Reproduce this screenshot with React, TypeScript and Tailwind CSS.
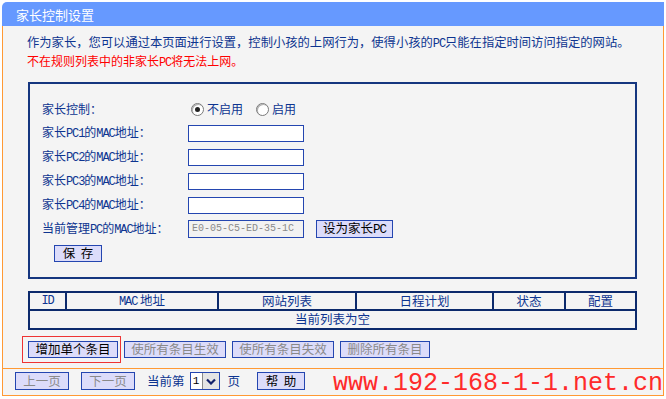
import React from "react";

const CJK = { fontFamily: '"Noto Sans CJK SC", "Noto Sans", sans-serif' };
const MONO = { fontFamily: '"Liberation Mono", "DejaVu Sans Mono", monospace' };

function A({ children, size = "text-[12px]" }: { children: React.ReactNode; size?: string }) {
  return <span className={`${size} leading-none tracking-[-1.1px]`} style={MONO}>{children}</span>;
}

function Radio({ checked }: { checked: boolean }) {
  return (
    <span className="relative inline-flex w-[13px] h-[13px] rounded-full border border-[#7a7a7a] bg-white items-center justify-center shadow-[inset_1px_1px_0_#b0b0b0]">
      {checked && <span className="w-[5px] h-[5px] rounded-full bg-[#222]" />}
    </span>
  );
}

function Btn({ children, w, gray, h = "h-[17px]" }: { children: React.ReactNode; w: string; gray?: boolean; h?: string }) {
  return (
    <div
      className={`${w} ${h} flex items-center justify-center bg-[#dcdcfa] border border-[#2446b0] text-[12.5px] leading-none ${gray ? "text-[#8a8a8a]" : "text-black"}`}
    >
      {children}
    </div>
  );
}

function Row({ label, children }: { label: React.ReactNode; children: React.ReactNode }) {
  return (
    <div className="flex items-center h-[24px]">
      <div className="w-[146px] text-[12px] leading-none text-[#0d3490]">{label}</div>
      {children}
    </div>
  );
}

function Input() {
  return <div className="w-[116px] h-[17px] border border-[#2446b0] bg-white" />;
}

export default function App() {
  return (
    <div className="w-[666px] h-[399px] bg-white relative overflow-hidden" style={CJK}>
      <div className="ml-[2px] mt-[2px] w-[662px]">
        <div className="h-[24px] bg-[#6699ff] rounded-tl-[5px] text-white text-[13px] leading-none pl-[14px] flex items-center">
          家长控制设置
        </div>
        <div className="border-x border-b border-[#ff9933] bg-[#f4f4f4] h-[370px]">
          <div className="pt-[7px] pl-[24px]">
            <div className="h-[19px] flex items-center text-[#0d3490] text-[12.3px] leading-none whitespace-nowrap">
              <span>作为家长，您可以通过本页面进行设置，控制小孩的上网行为，使得小孩的<A>PC</A>只能在指定时间访问指定的网站。</span>
            </div>
            <div className="h-[19px] flex items-center text-[#ff0000] text-[12px] leading-none whitespace-nowrap">
              <span>不在规则列表中的非家长<A>PC</A>将无法上网。</span>
            </div>
          </div>

          <div className="ml-[25px] mt-[11px] w-[609px] h-[197px] border-2 border-[#15367f] pl-[12px] pt-[13px]">
            <Row label="家长控制：">
              <div className="flex items-center ml-[3px] text-[12px] leading-none text-[#0d3490]">
                <Radio checked />
                <span className="ml-[3px]">不启用</span>
                <span className="ml-[13px] flex"><Radio checked={false} /></span>
                <span className="ml-[3px]">启用</span>
              </div>
            </Row>
            <Row label={<>家长<A>PC1</A>的<A>MAC</A>地址：</>}><Input /></Row>
            <Row label={<>家长<A>PC2</A>的<A>MAC</A>地址：</>}><Input /></Row>
            <Row label={<>家长<A>PC3</A>的<A>MAC</A>地址：</>}><Input /></Row>
            <Row label={<>家长<A>PC4</A>的<A>MAC</A>地址：</>}><Input /></Row>
            <Row label={<>当前管理<A>PC</A>的<A>MAC</A>地址：</>}>
              <div
                className="w-[116px] h-[18px] border border-[#2446b0] bg-[#f2f2f2] text-[#8a8a8a] text-[10px] leading-none flex items-center pl-[3px]"
                style={MONO}
              >
                E0-05-C5-ED-35-1C
              </div>
              <div className="ml-[12px]">
                <Btn w="w-[77px]" h="h-[18px]"><span>设为家长<A size="text-[12.5px]">PC</A></span></Btn>
              </div>
            </Row>
            <div className="ml-[12px] mt-[4px]">
              <Btn w="w-[48px]">保&nbsp;&nbsp;存</Btn>
            </div>
          </div>

          <div className="ml-[25px] mt-[12px] w-[609px] border-2 border-[#0c2a6c] text-[12.5px] leading-none text-[#0d3490]">
            <div className="flex h-[18px] border-b-2 border-[#0c2a6c]">
              <div className="w-[37px] flex items-center justify-center border-r-2 border-[#0c2a6c]"><A>ID</A></div>
              <div className="w-[152px] flex items-center justify-center border-r-2 border-[#0c2a6c]">
                <span><A>MAC</A>&nbsp;地址</span>
              </div>
              <div className="w-[138px] flex items-center justify-center border-r-2 border-[#0c2a6c]">网站列表</div>
              <div className="w-[137px] flex items-center justify-center border-r-2 border-[#0c2a6c]">日程计划</div>
              <div className="w-[72px] flex items-center justify-center border-r-2 border-[#0c2a6c]">状态</div>
              <div className="flex-1 flex items-center justify-center">配置</div>
            </div>
            <div className="h-[17px] flex items-center justify-center">当前列表为空</div>
          </div>

          <div className="relative flex gap-[6px] ml-[25px] mt-[11px]">
            <Btn w="w-[90px]">增加单个条目</Btn>
            <Btn w="w-[102px]" gray>使所有条目生效</Btn>
            <Btn w="w-[102px]" gray>使所有条目失效</Btn>
            <Btn w="w-[90px]" gray>删除所有条目</Btn>
            <div className="absolute left-[-6px] top-[-5px] w-[99px] h-[27px] border border-[#ee3333]" />
          </div>

          <div className="mt-[10px] border-t border-[#ff9933] flex items-center pt-[3px] pl-[12px] text-[12.5px] leading-none text-[#0d3490]">
            <Btn w="w-[54px]" h="h-[18px]" gray>上一页</Btn>
            <div className="ml-[12px]"><Btn w="w-[54px]" h="h-[18px]" gray>下一页</Btn></div>
            <span className="ml-[12px]">当前第</span>
            <div className="ml-[5px] w-[30px] h-[18px] border border-[#2446b0] bg-white flex">
              <div className="w-[11px] text-[11px] text-black flex items-center justify-center" style={MONO}>1</div>
              <div className="flex-1 bg-[#e4e4e4] border-l border-[#888] flex items-center justify-center">
                <svg width="10" height="7" viewBox="0 0 10 7">
                  <path d="M1 1.5 L5 5.5 L9 1.5" stroke="#12206a" strokeWidth="2.2" fill="none" />
                </svg>
              </div>
            </div>
            <span className="ml-[8px]">页</span>
            <div className="ml-[17px]"><Btn w="w-[48px]" h="h-[18px]">帮&nbsp;&nbsp;助</Btn></div>
          </div>
        </div>
      </div>
      <div
        className="absolute left-[333px] top-[369px] text-[25px] leading-[30px] text-[#ff2a2a]"
        style={MONO}
      >
        www.192-168-1-1.net.cn
      </div>
    </div>
  );
}
